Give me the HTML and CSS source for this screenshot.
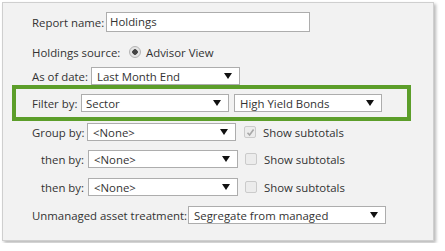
FILE: index.html
```html
<!DOCTYPE html>
<html lang="en">
  <head>
    <meta charset="UTF-8" />
    <meta name="viewport" content="width=device-width, initial-scale=1.0" />
    <title>Report settings</title>
    <link rel="stylesheet" href="styles.css">
  </head>
  <body>
    <!-- Report settings panel -->
    <div class="panel">
      <div class="row row-name">
        <label class="lbl lbl-name">Report name:</label>
        <div class="input">Holdings</div>
      </div>

      <div class="row row-source">
        <label class="lbl lbl-source">Holdings source:</label>
        <span class="radio"></span>
        <span class="opt">Advisor View</span>
      </div>

      <div class="row row-date">
        <label class="lbl lbl-date">As of date:</label>
        <div class="select sel-date"><span>Last Month End</span><i class="arrow"></i></div>
      </div>

      <!-- Highlighted filter -->
      <div class="highlight">
        <label class="lbl lbl-filter">Filter by:</label>
        <div class="select sel-filter"><span>Sector</span><i class="arrow"></i></div>
        <div class="select sel-value"><span>High Yield Bonds</span><i class="arrow"></i></div>
      </div>

      <div class="row row-group">
        <label class="lbl lbl-group">Group by:</label>
        <div class="select sel-group"><span>&lt;None&gt;</span><i class="arrow"></i></div>
        <span class="check checked">
          <svg width="9" height="9" viewBox="0 0 9 9"><path d="M1.5 4.8 L3.6 7 L7.6 1.5" fill="none" stroke="#a8a8a8" stroke-width="1.6"/></svg>
        </span>
        <span class="opt">Show subtotals</span>
      </div>

      <div class="row row-then">
        <label class="lbl lbl-then">then by:</label>
        <div class="select sel-then"><span>&lt;None&gt;</span><i class="arrow"></i></div>
        <span class="check"></span>
        <span class="opt">Show subtotals</span>
      </div>

      <div class="row row-then">
        <label class="lbl lbl-then">then by:</label>
        <div class="select sel-then"><span>&lt;None&gt;</span><i class="arrow"></i></div>
        <span class="check"></span>
        <span class="opt">Show subtotals</span>
      </div>

      <div class="row row-unmanaged">
        <label class="lbl lbl-unmanaged">Unmanaged asset treatment:</label>
        <div class="select sel-unmanaged"><span>Segregate from managed</span><i class="arrow"></i></div>
      </div>
    </div>
  </body>
</html>
```

FILE: styles.css
```css
body {
  margin: 0;
  background: #fff;
  font-family: "Open Sans", "Noto Sans", sans-serif;
  font-size: 11.4px;
  color: #333;
}
.panel {
  box-sizing: border-box;
  width: 432px;
  height: 239px;
  margin: 2px;
  padding-left: 29px;
  padding-top: 9px;
  background: #f2f2f2;
  border: 1px solid #cfcfcf;
  box-shadow: 2px 2px 3px rgba(0, 0, 0, 0.28);
}
.row {
  display: flex;
  align-items: center;
  height: 18px;
}
.lbl {
  flex: none;
  white-space: nowrap;
}
.row-name {
  height: 20px;
}
.row-source {
  margin-top: 12px;
  height: 16px;
}
.row-date {
  margin-top: 7px;
}
.row-group {
  margin-top: 2px;
}
.row-then {
  margin-top: 9px;
}
.row-then + .row-then,
.row-unmanaged {
  margin-top: 10px;
}
.lbl-name { width: 74px; }
.lbl-source { width: 97px; }
.lbl-date { width: 59px; }
.lbl-filter { width: 49px; }
.lbl-group { width: 55px; }
.lbl-then { width: 52px; text-align: right; padding-right: 4px; }
.lbl-unmanaged { width: 156px; }

.input {
  box-sizing: border-box;
  width: 204px;
  height: 20px;
  padding: 0 3px;
  line-height: 18px;
  background: #fff;
  border: 1px solid #adadad;
}
.select {
  box-sizing: border-box;
  display: flex;
  align-items: center;
  justify-content: space-between;
  height: 18px;
  padding: 0 7px 0 5px;
  background: #fff;
  border: 1px solid #adadad;
  white-space: nowrap;
}
.arrow {
  width: 0;
  height: 0;
  border-left: 4px solid transparent;
  border-right: 4px solid transparent;
  border-top: 6px solid #111;
}
.sel-date { width: 149px; }
.sel-filter { width: 148px; padding-left: 4px; }
.sel-value { width: 148px; margin-left: 5px; }
.sel-group { width: 149px; }
.sel-then { width: 150px; }
.sel-unmanaged { width: 198px; }

.highlight {
  box-sizing: border-box;
  display: flex;
  align-items: center;
  width: 399px;
  height: 36px;
  margin-left: -20px;
  padding-left: 16px;
  border: 4px solid #5c9e2a;
}

.radio {
  box-sizing: border-box;
  width: 12px;
  height: 12px;
  margin-right: 5px;
  border-radius: 50%;
  border: 1px solid #b4b4b4;
  background: radial-gradient(circle, #444 0 2.5px, #e4e4e4 3px);
}
.check {
  box-sizing: border-box;
  display: flex;
  align-items: center;
  justify-content: center;
  width: 12px;
  height: 12px;
  margin-left: 8px;
  margin-right: 7px;
  border: 1px solid #cbcbcb;
  border-radius: 2px;
  background: #ececec;
}
.row-then .check {
  margin-left: 7px;
}
.opt {
  white-space: nowrap;
}
```
